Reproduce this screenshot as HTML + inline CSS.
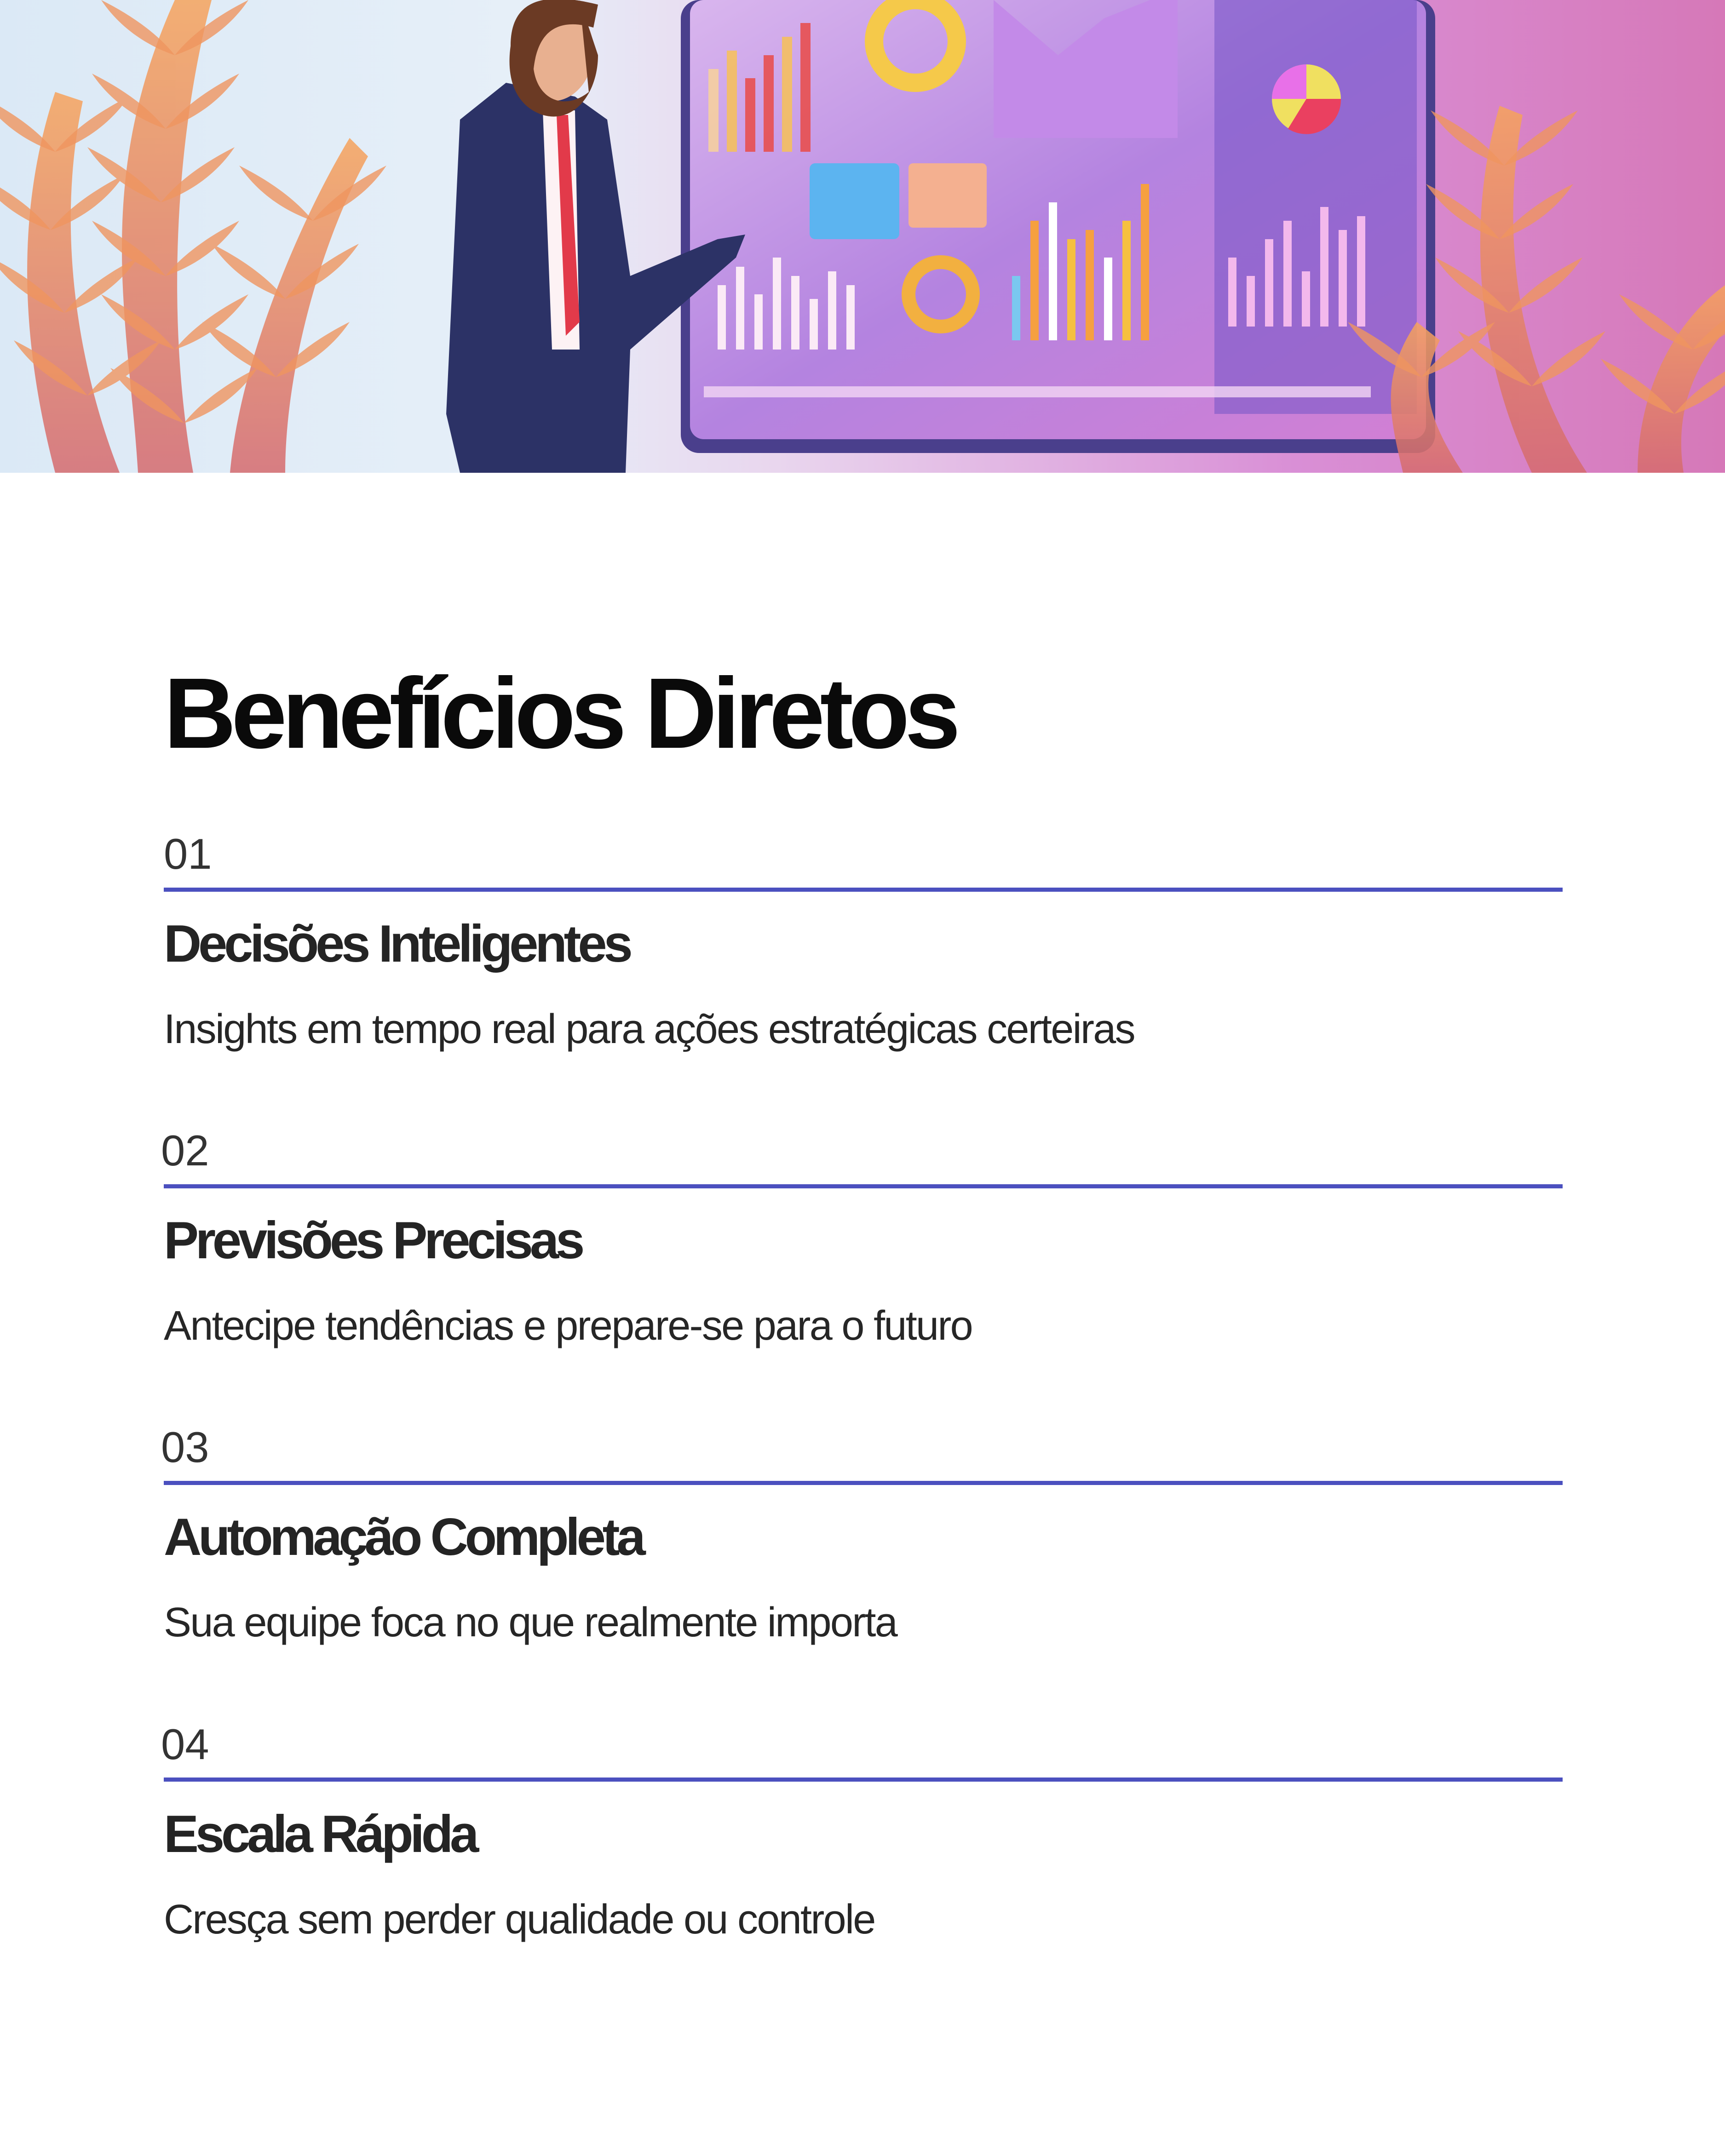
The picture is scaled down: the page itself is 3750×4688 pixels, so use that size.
<!DOCTYPE html>
<html><head><meta charset="utf-8"><style>
*{margin:0;padding:0;box-sizing:border-box}
body{width:3750px;height:4688px;background:#fff;position:relative;overflow:hidden;font-family:"Liberation Sans",sans-serif}
.a{position:absolute;left:356px;line-height:1;white-space:nowrap}
.t{font-size:218px;font-weight:bold;color:#0a0a0a;letter-spacing:-10.7px}
.n{font-size:94px;color:#333;font-weight:normal}
.h{font-size:114px;font-weight:bold;color:#242424;letter-spacing:-7.3px}
.d{font-size:90px;color:#262626;letter-spacing:-2.7px}
.l{position:absolute;left:356px;width:3041px;height:9px;background:#4b50bf}
</style></head><body>
<svg style="position:absolute;left:0;top:0" width="3750" height="1028" viewBox="0 0 3750 1028">
<defs>
<linearGradient id="bg" x1="0" y1="0" x2="1" y2="0">
<stop offset="0" stop-color="#dbe9f6"/><stop offset="0.3" stop-color="#e6eff8"/><stop offset="0.45" stop-color="#e9d6ee"/><stop offset="0.75" stop-color="#d98fd6"/><stop offset="1" stop-color="#d678b8"/></linearGradient>
<linearGradient id="bd" x1="0" y1="0" x2="1" y2="1">
<stop offset="0" stop-color="#d9b6ee"/><stop offset="0.5" stop-color="#b483e0"/><stop offset="1" stop-color="#d27fd4"/></linearGradient>
<linearGradient id="pl" x1="0" y1="0" x2="0" y2="1">
<stop offset="0" stop-color="#f6a35c"/><stop offset="1" stop-color="#d56a6e"/></linearGradient>
<g id="leaf"><path d="M0 0 C60 -20 120 -60 160 -120 C100 -90 40 -50 0 0 Z"/><path d="M0 0 C-60 -20 -120 -60 -160 -120 C-100 -90 -40 -50 0 0 Z"/></g>
</defs>
<rect width="3750" height="1028" fill="url(#bg)"/>
<rect x="1480" y="0" width="1640" height="985" rx="40" fill="#4a3f8c"/>
<rect x="1500" y="0" width="1600" height="955" rx="30" fill="url(#bd)"/>
<rect x="2640" y="0" width="440" height="900" fill="#7a58c8" opacity="0.6"/>
<g fill="#f6d0a0" opacity="0.9">
<rect x="1540" y="150" width="22" height="180"/><rect x="1580" y="110" width="22" height="220" fill="#f5c060"/><rect x="1620" y="170" width="22" height="160" fill="#e85050"/><rect x="1660" y="120" width="22" height="210" fill="#e85050"/><rect x="1700" y="80" width="22" height="250" fill="#f5c060"/><rect x="1740" y="50" width="22" height="280" fill="#e85050"/>
</g>
<circle cx="1990" cy="90" r="90" fill="none" stroke="#f5c94a" stroke-width="40"/>
<path d="M2160 0 L2300 120 L2400 40 L2500 0 L2560 0 L2560 300 L2160 300 Z" fill="#c38ae8"/>
<circle cx="2840" cy="215" r="75" fill="#f0e060"/><path d="M2840 215 L2840 140 A75 75 0 0 0 2765 215 Z" fill="#e870e8"/><path d="M2840 215 L2915 215 A75 75 0 0 1 2800 280 Z" fill="#ea4060"/>
<rect x="1760" y="355" width="195" height="165" rx="12" fill="#5cb4f0"/><rect x="1975" y="355" width="170" height="140" rx="10" fill="#f4b090"/>
<g fill="#fbeaf6"><rect x="1560" y="620" width="18" height="140"/><rect x="1600" y="580" width="18" height="180"/><rect x="1640" y="640" width="18" height="120"/><rect x="1680" y="560" width="18" height="200"/><rect x="1720" y="600" width="18" height="160"/><rect x="1760" y="650" width="18" height="110"/><rect x="1800" y="590" width="18" height="170"/><rect x="1840" y="620" width="18" height="140"/></g>
<circle cx="2045" cy="640" r="70" fill="none" stroke="#f2b040" stroke-width="30"/>
<g><rect x="2200" y="600" width="18" height="140" fill="#7ac8f0"/><rect x="2240" y="480" width="18" height="260" fill="#f6a040"/><rect x="2280" y="440" width="18" height="300" fill="#fff"/><rect x="2320" y="520" width="18" height="220" fill="#f5c040"/><rect x="2360" y="500" width="18" height="240" fill="#f6a040"/><rect x="2400" y="560" width="18" height="180" fill="#fff"/><rect x="2440" y="480" width="18" height="260" fill="#f6c040"/><rect x="2480" y="400" width="18" height="340" fill="#f6a040"/></g>
<g fill="#f3b8ec"><rect x="2670" y="560" width="18" height="150"/><rect x="2710" y="600" width="18" height="110"/><rect x="2750" y="520" width="18" height="190"/><rect x="2790" y="480" width="18" height="230"/><rect x="2830" y="590" width="18" height="120"/><rect x="2870" y="450" width="18" height="260"/><rect x="2910" y="500" width="18" height="210"/><rect x="2950" y="470" width="18" height="240"/></g>
<rect x="1530" y="840" width="1450" height="24" fill="#f2d6f4" opacity="0.8"/>
<g fill="url(#pl)" opacity="0.85">
<path d="M300 1028 C280 700 200 400 380 0 L460 0 C380 300 360 700 420 1028 Z"/>
<path d="M120 1028 C60 800 20 500 120 200 L180 220 C120 500 170 800 260 1028 Z"/>
<path d="M500 1028 C520 800 640 500 760 300 L800 340 C700 520 620 800 620 1028 Z"/>
<path d="M3330 1028 C3220 800 3180 500 3260 230 L3310 250 C3260 520 3300 800 3450 1028 Z"/>
<path d="M3050 1028 C3020 900 3000 820 3080 700 L3130 740 C3080 840 3110 920 3180 1028 Z"/>
<path d="M3560 1028 C3560 850 3640 700 3750 620 L3750 720 C3680 800 3640 900 3660 1028 Z"/>
</g>
<g fill="#ef9560" opacity="0.8">
<use href="#leaf" x="380" y="120"/><use href="#leaf" x="360" y="280"/><use href="#leaf" x="350" y="440"/><use href="#leaf" x="360" y="600"/><use href="#leaf" x="380" y="760"/><use href="#leaf" x="400" y="920"/>
<use href="#leaf" x="120" y="330"/><use href="#leaf" x="110" y="500"/><use href="#leaf" x="140" y="680"/><use href="#leaf" x="190" y="860"/>
<use href="#leaf" x="680" y="480"/><use href="#leaf" x="620" y="650"/><use href="#leaf" x="600" y="820"/>
<use href="#leaf" x="3270" y="360"/><use href="#leaf" x="3260" y="520"/><use href="#leaf" x="3280" y="680"/><use href="#leaf" x="3330" y="840"/><use href="#leaf" x="3680" y="760"/><use href="#leaf" x="3640" y="900"/><use href="#leaf" x="3090" y="820"/>
</g>
<path d="M1100 180 L1000 260 L970 900 L1000 1028 L1360 1028 L1370 760 L1600 560 L1620 510 L1560 520 L1370 600 L1320 260 L1250 210 Z" fill="#2c3266"/>
<path d="M1180 240 L1250 240 L1260 760 L1200 760 Z" fill="#fdf2f4"/>
<path d="M1210 250 L1235 250 L1260 700 L1230 730 Z" fill="#e23a4a"/>
<ellipse cx="1200" cy="110" rx="90" ry="110" fill="#e8b090"/>
<path d="M1110 100 C1110 0 1180 -20 1300 10 L1290 60 C1220 40 1170 60 1160 150 C1170 220 1230 240 1280 200 L1260 0 L1300 120 C1300 200 1250 270 1180 250 C1120 230 1100 170 1110 100 Z" fill="#6b3a24"/>
</svg>
<div class="a t" style="top:1443px">Benefícios Diretos</div>
<div class="a n" style="top:1810px">01</div>
<div class="l" style="top:1930px"></div>
<div class="a h" style="top:1996px">Decisões Inteligentes</div>
<div class="a d" style="top:2193px">Insights em tempo real para ações estratégicas certeiras</div>
<div class="a n" style="top:2455px;left:350px">02</div>
<div class="l" style="top:2575px"></div>
<div class="a h" style="top:2641px">Previsões Precisas</div>
<div class="a d" style="top:2838px">Antecipe tendências e prepare-se para o futuro</div>
<div class="a n" style="top:3100px;left:350px">03</div>
<div class="l" style="top:3220px"></div>
<div class="a h" style="top:3286px">Automação Completa</div>
<div class="a d" style="top:3483px">Sua equipe foca no que realmente importa</div>
<div class="a n" style="top:3746px;left:350px">04</div>
<div class="l" style="top:3865px"></div>
<div class="a h" style="top:3932px">Escala Rápida</div>
<div class="a d" style="top:4129px">Cresça sem perder qualidade ou controle</div>
</body></html>
